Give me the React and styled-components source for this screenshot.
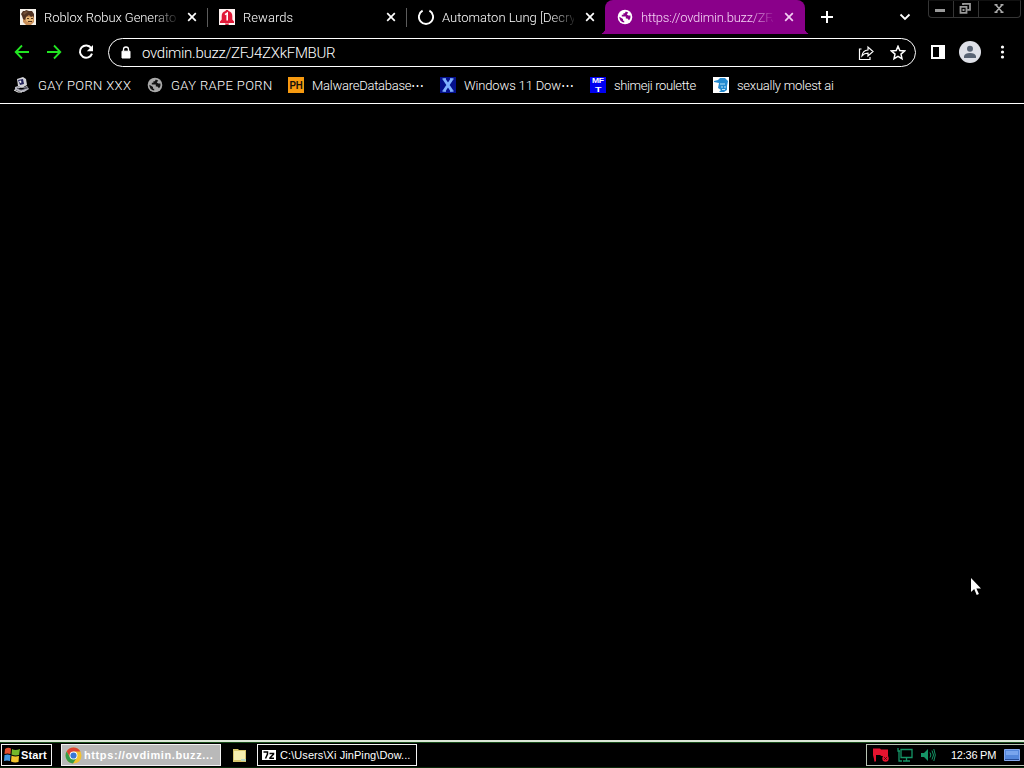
import React from 'react';
import styled, { createGlobalStyle } from 'styled-components';

const GlobalStyle = createGlobalStyle`
  * {
    box-sizing: border-box;
  }
  body {
    margin: 0;
    background: #000;
    overflow: hidden;
  }
  svg {
    display: block;
    flex: none;
  }
`;

const Desktop = styled.div`
  width: 1024px;
  height: 768px;
  display: flex;
  flex-direction: column;
  background: #000;
  color: #fff;
  font-family: Roboto, 'Liberation Sans', sans-serif;
  font-size: 13px;
  font-weight: 300;
  position: relative;
`;

const TabStrip = styled.div`
  height: 34px;
  display: flex;
  padding-left: 9px;
`;

const Tab = styled.div`
  width: 199px;
  height: 34px;
  display: flex;
  align-items: center;
  padding-left: 11px;
  position: relative;
`;

const TabTitle = styled.span`
  flex: none;
  width: 132px;
  margin: 0 11px 0 8px;
  padding-top: 1px;
  white-space: pre;
  line-height: 18px;
  letter-spacing: ${({ $spacing }) => $spacing}px;
  mask-image: linear-gradient(90deg, #000 108px, transparent 136px);
`;

const ActiveTab = styled(Tab)`
  width: 200px;
  margin-left: -1px;
  padding-left: 12px;
  background: #8a008a;
  border-radius: 8px 8px 0 0;
  color: #f6d5f6;
  &::before,
  &::after {
    content: '';
    position: absolute;
    bottom: 0;
    width: 6px;
    height: 6px;
  }
  &::before {
    left: -6px;
    background: radial-gradient(circle at 0 0, transparent 6px, #8a008a 6.5px);
  }
  &::after {
    right: -6px;
    background: radial-gradient(circle at 100% 0, transparent 6px, #8a008a 6.5px);
  }
`;

const Separator = styled.i`
  flex: none;
  width: 1px;
  height: 19px;
  margin-left: 10px;
  background: #5c5c5c;
`;

const NewTab = styled.div`
  width: 14px;
  margin-left: 16px;
  display: flex;
  align-items: center;
`;

const TabSearch = styled.div`
  margin-left: 64px;
  display: flex;
  align-items: center;
`;

const WindowButtons = styled.div`
  width: 93px;
  height: 18px;
  margin-left: 17px;
  display: grid;
  grid-template-columns: 25px 25px 1fr;
  border: 1px solid #353535;
  border-top-color: #111;
  border-radius: 0 0 4px 4px;
`;

const WindowButton = styled.div`
  display: flex;
  justify-content: center;
  padding-right: 2px;
  border-right: 1px solid #353535;
  &:last-child {
    border: 0;
  }
`;

const Toolbar = styled.div`
  height: 36px;
  display: flex;
  align-items: center;
  padding: 0 14px;
`;

const NavButtons = styled.div`
  width: 94px;
  display: flex;
  gap: 16px;
`;

const AddressBar = styled.div`
  width: 808px;
  height: 29px;
  margin-top: 1px;
  display: flex;
  align-items: center;
  padding: 0 9px 0 12px;
  border: 1px solid #fff;
  border-radius: 15px;
`;

const Url = styled.span`
  flex: 1;
  margin-left: 11px;
  font-size: 15px;
  line-height: 20px;
  letter-spacing: -0.28px;
`;

const AddressActions = styled.div`
  display: flex;
  gap: 16px;
`;

const ToolbarActions = styled.div`
  display: flex;
  align-items: center;
  margin-left: 14px;
  gap: 13px;
`;

const Bookmarks = styled.div`
  height: 34px;
  display: flex;
  align-items: center;
  padding: 0 0 3px 14px;
  border-bottom: 1px solid #fff;
`;

const Bookmark = styled.div`
  width: ${({ $width }) => $width}px;
  display: flex;
  align-items: center;
  gap: 8px;
  line-height: 16px;
  white-space: nowrap;
  letter-spacing: ${({ $spacing }) => $spacing}px;
  span {
    padding-top: 2px;
  }
`;

const Page = styled.main`
  flex: 1;
  background: #000;
`;

const Taskbar = styled.footer`
  height: 28px;
  display: flex;
  align-items: center;
  padding: 1px 0 0 1px;
  border-top: 2px solid #dce8d8;
  border-bottom: 1px solid #0a2c0c;
  box-shadow: inset 0 1px #174d1a;
  font-family: 'Liberation Sans', Arial, sans-serif;
  font-size: 11px;
  font-weight: 400;
`;

const StartButton = styled.div`
  width: 51px;
  height: 22px;
  display: flex;
  align-items: center;
  gap: 1px;
  padding-left: 2px;
  border: 1px solid #f4f4f4;
  font-weight: 700;
  letter-spacing: 0.15px;
`;

const TaskButton = styled.div`
  width: 160px;
  height: 22px;
  margin-left: 9px;
  display: flex;
  align-items: center;
  gap: ${({ $active }) => ($active ? 2 : 3)}px;
  padding-left: 3px;
  border: 1px solid #f4f4f4;
  white-space: nowrap;
  background: ${({ $active }) => ($active ? '#b9b9b9' : '#000')};
  font-weight: ${({ $active }) => ($active ? 700 : 400)};
  letter-spacing: ${({ $spacing }) => $spacing}px;
`;

const QuickFolder = styled.div`
  margin-left: 11px;
`;

const Tray = styled.div`
  width: 158px;
  height: 22px;
  margin-left: auto;
  display: flex;
  align-items: center;
  border: 1px solid #b8c4b4;
  border-right: 0;
  padding-left: 5px;
  gap: 7px;
`;

const Clock = styled.span`
  width: 46px;
  margin-left: 8px;
  letter-spacing: -0.25px;
  white-space: nowrap;
`;

const Cursor = styled.svg`
  position: absolute;
  left: 970px;
  top: 577px;
`;

const Close = ({ color = '#fff' }) => (
  <svg width="10" height="10" viewBox="0 0 10 10">
    <path d="M1.2 1.2 8.8 8.8M8.8 1.2 1.2 8.8" stroke={color} strokeWidth="1.7" />
  </svg>
);

const Globe = ({ color, land }) => (
  <svg width="16" height="16" viewBox="0 0 16 16">
    <circle cx="8" cy="8" r="7.3" fill={color} />
    <path d="M8.8 2.4 7.8 4.2H6.4v1.6H4.8v1.6h4v2.2h1.6l1.6 1.6c1.2-1.2 1.8-2.8 1.4-4.8h-2L9.8 5.4l1.4-2zM2.4 7.8c-.2 3 1.8 5.4 4.8 5.8v-1.8H6V10z" fill={land} />
  </svg>
);

const RobloxFace = () => (
  <svg width="16" height="16" viewBox="0 0 16 16">
    <path fill="#f5f1ea" d="M0 0h16v16H0z" />
    <path fill="#c98f58" d="M3 6h11v7l-3 3H6l-3-3z" />
    <path fill="#e6b878" d="M6 8h7v4l-3 2-4-2z" />
    <path fill="#513322" d="m1 5 2-3h2l1-1 3 1h3l2 3v4l-1-2-2 1-2-2-3 2-1 3-2-1-1-3z" />
    <path stroke="#56351f" d="M7 9.5h2m2 0h2m-5 3h4" />
    <path fill="#735037" d="m3 4 3-2 2 1-4 3z" />
  </svg>
);

const Bell = () => (
  <svg width="16" height="16" viewBox="0 0 16 16">
    <path fill="#fff4f3" d="M0 0h16v16H0z" />
    <path fill="#e01837" d="M6.5 2 7 1h2l.5 1c2.500.6 3.800 2.600 3.800 5v3.500l1.700 2V14H1v-1.500l1.700-2V7c0-2.400 1.300-4.400 3.800-5zM6 14.500h4L9.500 16h-3z" />
    <path fill="none" stroke="#fff" strokeWidth="1.6" d="m6 5.6 2.2-1.4v7.200" />
  </svg>
);

const Spinner = () => (
  <svg width="16" height="16" viewBox="0 0 16 16">
    <path d="M4.6 1.700A7.100 7.100 0 1 0 11.400 1.700" fill="none" stroke="#fff" strokeWidth="1.9" />
  </svg>
);

const Arrow = ({ flip }) => (
  <svg width="16" height="16" viewBox="0 0 16 16" transform={flip ? 'scale(-1 1)' : undefined}>
    <path d="M15 8H2M8 1.5 1.7 8 8 14.5" fill="none" stroke="#22e622" strokeWidth="1.8" />
  </svg>
);

const Reload = () => (
  <svg width="16" height="16" viewBox="0 0 16 16">
    <path d="M13.2 4A6.2 6.2 0 1 0 14 9.6" fill="none" stroke="#fff" strokeWidth="2" />
    <path d="M15 1v6.2H8.8z" fill="#fff" />
  </svg>
);

const Lock = () => (
  <svg width="10" height="14" viewBox="0 0 10 14">
    <path d="M1 5.2h8V12H1z" fill="#fff" stroke="#fff" strokeLinejoin="round" />
    <path d="M2.5 5V3.5a2.5 2.5 0 0 1 5 0V5" fill="none" stroke="#fff" strokeWidth="1.3" />
  </svg>
);

const Share = () => (
  <svg width="16" height="16" viewBox="0 0 16 16">
    <path d="M3.5 4h-2v10.500H12V12M4 10.800C4.500 7.200 6.600 5.200 10 5V2l5 4.500-5 4.400V8.200c-2.600 0-4.500.8-6 2.600z" fill="none" stroke="#fff" strokeWidth="1.2" />
  </svg>
);

const Star = () => (
  <svg width="16" height="16" viewBox="0 0 16 16">
    <path d="m8 1.300 1.800 4.300 4.700.4-3.500 3.100 1 4.600-4-2.400-4 2.400 1-4.600-3.500-3.100 4.700-.4z" fill="none" stroke="#fff" strokeWidth="1.5" />
  </svg>
);

const Computer = () => (
  <svg width="16" height="16" viewBox="0 0 16 16">
    <path fill="#d3d3d8" d="m3 2 6-2 3 2 1 6-5 3-4-2z" />
    <path fill="#24245c" d="m4 3 5-1 1 5-4 1z" />
    <path fill="#f4f4fa" d="m5 4 2-.5.5 2L6 6z" />
    <path fill="#b8b8c2" d="m1 10 3-1 4 2 5-2 2 3-5 3H6l-5-2z" />
    <path stroke="#50505f" d="m3 11 4 2 6-2m-3-1 4 1" />
    <path stroke="#fff" d="m0 13 4 2h4" />
  </svg>
);

const PhIcon = () => (
  <svg width="16" height="16" viewBox="0 0 16 16">
    <path fill="#f79a10" d="M0 0h16v16H0z" />
    <text x="1.5" y="12" fontFamily="Liberation Sans" fontWeight="700" fontSize="11" textLength="13" lengthAdjust="spacingAndGlyphs" fill="#17100a">PH</text>
  </svg>
);

const XIcon = () => (
  <svg width="16" height="16" viewBox="0 0 16 16">
    <path fill="#04108c" d="M0 0h16v16H0z" />
    <path d="m4 2 8 12M12 2 4 14" stroke="#7fb0ff" strokeWidth="2.8" />
    <path d="M2.5 2H6m4 0h3.500M2.500 14H6m4 0h3.500" stroke="#7fb0ff" strokeWidth="1.5" />
  </svg>
);

const MftIcon = () => (
  <svg width="16" height="16" viewBox="0 0 16 16">
    <path fill="#0000f0" d="M0 0h16v16H0z" />
    <g fill="#fff" fontFamily="Liberation Sans" fontWeight="700">
      <text x="2" y="6" fontSize="7" textLength="11.5" lengthAdjust="spacingAndGlyphs">MF</text>
      <text x="5" y="15" fontSize="7.5" textLength="6" lengthAdjust="spacingAndGlyphs">T</text>
    </g>
  </svg>
);

const BlueFace = () => (
  <svg width="16" height="16" viewBox="0 0 16 16">
    <path fill="#fff" d="M0 0h16v16H0z" />
    <path fill="#258bd0" d="m1 4 4-1 2-2h5l3 3-1 5v4l-3 2H6l2-2-3-2 1-5-5-1z" />
    <path stroke="#b8e5fa" d="M7 7h5m-4 3h2m1 0h2m-4 2.500h3" />
  </svg>
);

const Flag = () => (
  <svg width="18" height="16" viewBox="0 0 18 16">
    <path fill="none" stroke="#7d1020" strokeWidth="1.5" d="M3 2v13" />
    <path fill="#e6142f" d="M1 1.500h7l1 1h7V9H9.500L8 8H4v6H2.500L1 8z" />
    <circle cx="13.5" cy="11.5" r="3.2" fill="#e6142f" />
    <path d="m12.300 10.300 2.400 2.400m0-2.400-2.400 2.400" stroke="#32040b" />
  </svg>
);

const Network = () => (
  <svg width="16" height="16" viewBox="0 0 16 16">
    <path d="M4 2.5h11v8H4zM9.5 11v3M6 14h7M1 1v3h2M2 4v10h3" fill="none" stroke="#159566" strokeWidth="1.3" />
  </svg>
);

const Speaker = () => (
  <svg width="16" height="16" viewBox="0 0 16 16">
    <path d="M1 6h3l4-4v12l-4-4H1z" fill="#159566" />
    <path d="M10 5.5q1.8 2.500 0 5m2-7q3 4.500 0 9m1.800-10.500q3 6 0 12" fill="none" stroke="#159566" />
  </svg>
);

const WindowsLogo = () => (
  <svg width="16" height="16" viewBox="0 0 16 16">
    <path fill="#e45132" d="M1 2q3-2 6-.5L6.5 7q-3-1-6 0z" />
    <path fill="#74b82b" d="M8 2q3 2 8 0l-1 6q-4 1-7.500-.5z" />
    <path fill="#4396e0" d="M.5 8q3-1 6 0L6 14q-3-1-6 0z" />
    <path fill="#f2c42c" d="M7.500 8.500q3 1.500 7.500.5l-.5 6q-4 1-7.500-.5z" />
  </svg>
);

const Chrome = () => (
  <svg width="17" height="17" viewBox="0 0 16 16">
    <circle cx="8" cy="8" r="7.5" fill="#f3c22e" />
    <path d="M1.500 4.300A7.500 7.500 0 0 1 14.500 4.300H8L5 9.800z" fill="#dc4434" />
    <path d="M1.500 4.300A7.500 7.500 0 0 0 7.500 15.500L11 10 5 10z" fill="#359b49" />
    <circle cx="8" cy="8" r="3.7" fill="#fff" />
    <circle cx="8" cy="8" r="2.9" fill="#3976d5" />
  </svg>
);

const SevenZip = () => (
  <svg width="16" height="16" viewBox="0 0 16 16">
    <path fill="#fff" d="M1 3h14v10H1z" />
    <path d="M2.500 5h4v2L4.500 11.500M8.500 6.500h4v.8L9 10.800v.5h4" fill="none" stroke="#000" strokeWidth="1.5" />
  </svg>
);

const tabs = [
  { title: 'Roblox Robux Generato', icon: <RobloxFace />, spacing: -0.07 },
  { title: 'Rewards', icon: <Bell />, spacing: 0.05 },
  { title: 'Automaton Lung [Decry', icon: <Spinner />, spacing: 0 },
];

const bookmarks = [
  { title: 'GAY PORN XXX', icon: <Computer />, width: 133, spacing: 0.38 },
  { title: 'GAY RAPE PORN', icon: <Globe color="#aaa" land="#151515" />, width: 141, spacing: 0.38 },
  { title: 'MalwareDatabase⋯', icon: <PhIcon />, width: 152, spacing: -0.25 },
  { title: 'Windows 11 Dow⋯', icon: <XIcon />, width: 150, spacing: -0.15 },
  { title: 'shimeji roulette', icon: <MftIcon />, width: 123, spacing: -0.35 },
  { title: 'sexually molest ai', icon: <BlueFace />, width: 130, spacing: -0.25 },
];

export default function App() {
  return (
    <Desktop>
      <GlobalStyle />
      <TabStrip>
        {tabs.map((tab) => (
          <Tab key={tab.title}>
            {tab.icon}
            <TabTitle $spacing={tab.spacing}>{tab.title}</TabTitle>
            <Close />
            <Separator />
          </Tab>
        ))}
        <ActiveTab>
          <Globe color="#fff" land="#8a008a" />
          <TabTitle $spacing={-0.22}>https://ovdimin.buzz/ZFJ</TabTitle>
          <Close color="#f3cef3" />
        </ActiveTab>
        <NewTab>
          <svg width="12" height="12" viewBox="0 0 12 12">
            <path d="M6 0v12M0 6h12" stroke="#fff" strokeWidth="2" />
          </svg>
        </NewTab>
        <TabSearch>
          <svg width="12" height="8" viewBox="0 0 12 8">
            <path d="m1.500 1.500 4.500 4.500 4.500-4.500" fill="none" stroke="#fff" strokeWidth="1.8" />
          </svg>
        </TabSearch>
        <WindowButtons>
          <WindowButton>
            <svg width="12" height="17" viewBox="0 0 12 17">
              <path d="M1 8h10v3H1z" fill="#999" />
            </svg>
          </WindowButton>
          <WindowButton>
            <svg width="12" height="17" viewBox="0 0 12 17">
              <path d="M4 4V2.800h7v6H8.500M1.500 5.800h6v6h-6z" fill="none" stroke="#999" strokeWidth="1.8" />
              <path d="M3.500 8h2v2h-2z" fill="#999" />
            </svg>
          </WindowButton>
          <WindowButton>
            <svg width="12" height="17" viewBox="0 0 12 17">
              <path d="m2.500 3.500 7 8M9.500 3.500l-7 8M1.500 3.800h3m3 0h3M1.500 11.200h3m3 0h3" stroke="#aaa" strokeWidth="1.5" />
            </svg>
          </WindowButton>
        </WindowButtons>
      </TabStrip>
      <Toolbar>
        <NavButtons>
          <Arrow />
          <Arrow flip />
          <Reload />
        </NavButtons>
        <AddressBar>
          <Lock />
          <Url>ovdimin.buzz/ZFJ4ZXkFMBUR</Url>
          <AddressActions>
            <Share />
            <Star />
          </AddressActions>
        </AddressBar>
        <ToolbarActions>
          <svg width="16" height="16" viewBox="0 0 16 16">
            <path fill="#fff" fillRule="evenodd" d="M1 1h14v14H1zm2 2v10h6V3z" />
          </svg>
          <svg width="22" height="22" viewBox="0 0 22 22">
            <circle cx="11" cy="11" r="11" fill="#dfe1e8" />
            <circle cx="11" cy="7.8" r="3" fill="#596474" />
            <path d="M5 17v-2q1-3 6-3t6 3v2z" fill="#596474" />
          </svg>
          <svg width="16" height="16" viewBox="0 0 16 16">
            <g fill="#fff">
              <circle cx="8.5" cy="3" r="1.6" />
              <circle cx="8.5" cy="8" r="1.6" />
              <circle cx="8.5" cy="13" r="1.6" />
            </g>
          </svg>
        </ToolbarActions>
      </Toolbar>
      <Bookmarks>
        {bookmarks.map((item) => (
          <Bookmark key={item.title} $width={item.width} $spacing={item.spacing}>
            {item.icon}
            <span>{item.title}</span>
          </Bookmark>
        ))}
      </Bookmarks>
      <Page />
      <Taskbar>
        <StartButton>
          <WindowsLogo />
          Start
        </StartButton>
        <TaskButton $active $spacing={0.6}>
          <Chrome />
          <span>https://ovdimin.buzz...</span>
        </TaskButton>
        <QuickFolder>
          <svg width="16" height="16" viewBox="0 0 16 16">
            <path fill="#d8c66d" d="M1 2h5l1 1h7v12H1z" />
            <path fill="#f5eeb0" d="M2 4h11v9H2z" />
            <path fill="#b9d8c3" d="M9 12h5v2H9z" />
          </svg>
        </QuickFolder>
        <TaskButton $spacing={0.08}>
          <SevenZip />
          <span>C:\Users\Xi JinPing\Dow...</span>
        </TaskButton>
        <Tray>
          <Flag />
          <Network />
          <Speaker />
          <Clock>12:36 PM</Clock>
          <svg width="16" height="14" viewBox="0 0 16 14">
            <path fill="#5487dc" stroke="#87aaf0" d="M.5 1.500h15v11H.5z" />
            <path fill="#79a5ee" d="M2 3h12v4H2z" />
            <path fill="#244b98" d="M1 11h14v1H1z" />
          </svg>
        </Tray>
      </Taskbar>
      <Cursor width="12" height="20" viewBox="0 0 12 20">
        <path d="M1 1v14l3.200-3 2.500 6 2.200-1-2.500-5.500H11z" fill="#fff" />
      </Cursor>
    </Desktop>
  );
}
